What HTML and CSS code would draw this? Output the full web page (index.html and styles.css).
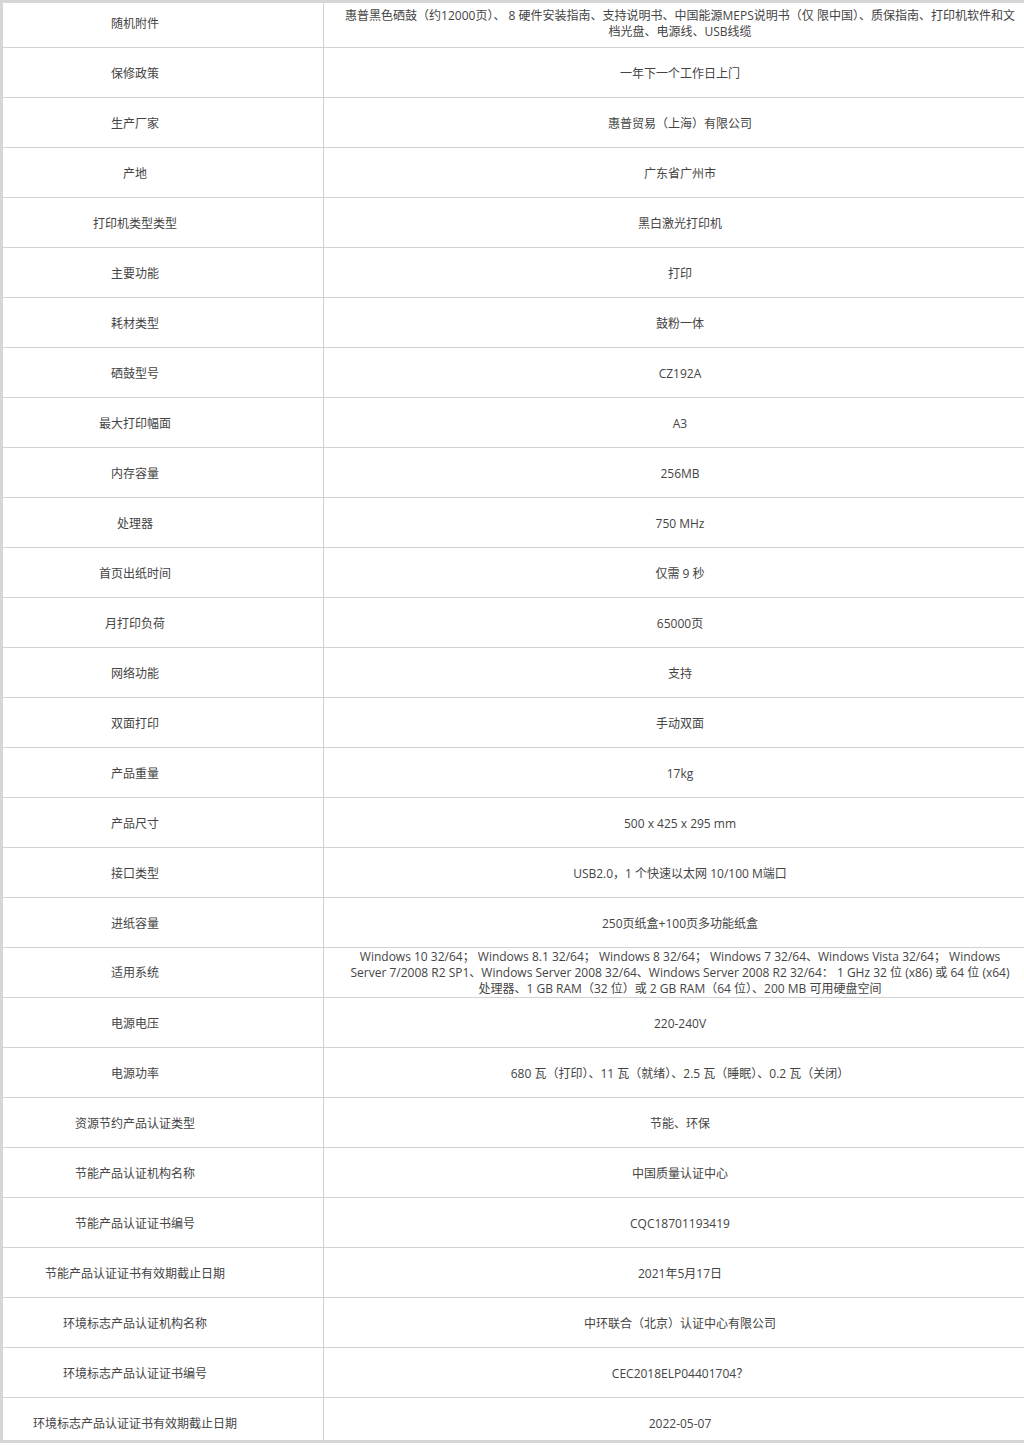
FILE: index.html
```html
<!DOCTYPE html>
<html lang="zh-CN">
<head>
<meta charset="utf-8">
<title>参数</title>
<link rel="stylesheet" href="styles.css">
</head>
<body>
<div class="frame">
<table class="spec">
<tbody>
<tr><td class="k">随机附件</td><td class="v">惠普黑色硒鼓（约12000页）、 8 硬件安装指南、支持说明书、中国能源MEPS说明书（仅 限中国）、质保指南、打印机软件和文档光盘、电源线、USB线缆</td></tr>
<tr><td class="k">保修政策</td><td class="v">一年下一个工作日上门</td></tr>
<tr><td class="k">生产厂家</td><td class="v">惠普贸易（上海）有限公司</td></tr>
<tr><td class="k">产地</td><td class="v">广东省广州市</td></tr>
<tr><td class="k">打印机类型类型</td><td class="v">黑白激光打印机</td></tr>
<tr><td class="k">主要功能</td><td class="v">打印</td></tr>
<tr><td class="k">耗材类型</td><td class="v">鼓粉一体</td></tr>
<tr><td class="k">硒鼓型号</td><td class="v">CZ192A</td></tr>
<tr><td class="k">最大打印幅面</td><td class="v">A3</td></tr>
<tr><td class="k">内存容量</td><td class="v">256MB</td></tr>
<tr><td class="k">处理器</td><td class="v">750 MHz</td></tr>
<tr><td class="k">首页出纸时间</td><td class="v">仅需 9 秒</td></tr>
<tr><td class="k">月打印负荷</td><td class="v">65000页</td></tr>
<tr><td class="k">网络功能</td><td class="v">支持</td></tr>
<tr><td class="k">双面打印</td><td class="v">手动双面</td></tr>
<tr><td class="k">产品重量</td><td class="v">17kg</td></tr>
<tr><td class="k">产品尺寸</td><td class="v">500 x 425 x 295 mm</td></tr>
<tr><td class="k">接口类型</td><td class="v">USB2.0，1 个快速以太网 10/100 M端口</td></tr>
<tr><td class="k">进纸容量</td><td class="v">250页纸盒+100页多功能纸盒</td></tr>
<tr class="multi"><td class="k">适用系统</td><td class="v">Windows 10 32/64； Windows 8.1 32/64； Windows 8 32/64； Windows 7 32/64、Windows Vista 32/64； Windows Server 7/2008 R2 SP1、Windows Server 2008 32/64、Windows Server 2008 R2 32/64： 1 GHz 32 位 (x86) 或 64 位 (x64) 处理器、1 GB RAM（32 位）或 2 GB RAM（64 位）、200 MB 可用硬盘空间</td></tr>
<tr><td class="k">电源电压</td><td class="v">220-240V</td></tr>
<tr><td class="k">电源功率</td><td class="v">680 瓦（打印）、11 瓦（就绪）、2.5 瓦（睡眠）、0.2 瓦（关闭）</td></tr>
<tr><td class="k">资源节约产品认证类型</td><td class="v">节能、环保</td></tr>
<tr><td class="k">节能产品认证机构名称</td><td class="v">中国质量认证中心</td></tr>
<tr><td class="k">节能产品认证证书编号</td><td class="v">CQC18701193419</td></tr>
<tr><td class="k">节能产品认证证书有效期截止日期</td><td class="v">2021年5月17日</td></tr>
<tr><td class="k">环境标志产品认证机构名称</td><td class="v">中环联合（北京）认证中心有限公司</td></tr>
<tr><td class="k">环境标志产品认证证书编号</td><td class="v">CEC2018ELP04401704？</td></tr>
<tr><td class="k">环境标志产品认证证书有效期截止日期</td><td class="v">2022-05-07</td></tr>
</tbody>
</table>
</div>
</body>
</html>
```

FILE: styles.css
```css
html, body {
  margin: 0;
  padding: 0;
  background: #ffffff;
  overflow: hidden;
}
body {
  font-family: "Open Sans", "Noto Sans CJK SC", sans-serif;
  font-size: 12px;
  color: #444444;
}
.frame {
  width: 1036px;
  height: 1437px;
  border-top: 3px solid #d6d6d6;
  border-left: 3px solid #d6d6d6;
  border-bottom: 3px solid #d6d6d6;
  overflow: hidden;
}
.spec {
  border-collapse: collapse;
  table-layout: fixed;
  width: 1033px;
  margin-top: -6px;
}
.spec td {
  height: 47px;
  border: 1px solid #d2d2d2;
  text-align: center;
  vertical-align: middle;
  line-height: 16px;
  padding: 2px 0 0 0;
}
.spec td.k {
  width: 264px;
  padding-right: 56px;
  border-left: none;
}
.spec td.v {
  padding-left: 21px;
  padding-right: 21px;
  border-right: none;
}
.spec tr.multi td {
  padding-top: 1px;
  height: 48px;
}
```
